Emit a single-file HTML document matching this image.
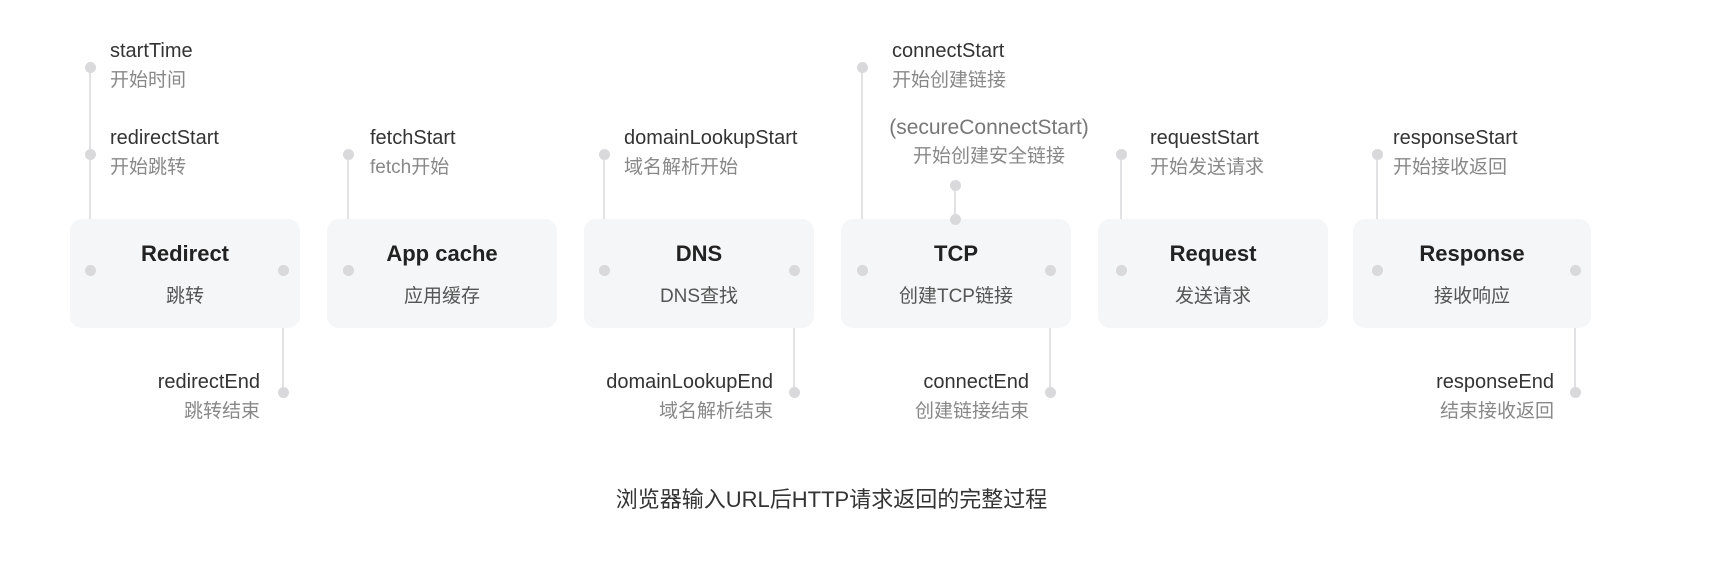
<!DOCTYPE html>
<html><head><meta charset="utf-8"><style>
body{margin:0;width:1709px;height:561px;background:#fff;position:relative;overflow:hidden;font-family:"Liberation Sans","Noto Sans CJK SC",sans-serif;}
.box{position:absolute;top:219px;width:230px;height:109px;background:#f5f6f7;border-radius:12px;text-align:center}
.box .t{position:absolute;left:0;right:0;top:22px;font-size:22px;font-weight:bold;color:#222}
.box .s{position:absolute;left:0;right:0;top:62px;font-size:19px;color:#555}
.d{position:absolute;width:11px;height:11px;border-radius:50%;background:#d9d9db;margin:-5px 0 0 -5px}
.l{position:absolute;width:2px;background:#e2e2e4;margin-left:-1px}
.lb{position:absolute;font-size:20px;line-height:29px;white-space:nowrap}
.lb b{font-weight:normal;color:#333;display:block}
.lb i{font-style:normal;color:#888;display:block;font-size:19px}
.r{text-align:right}
</style></head><body>
<div class="l" style="left:90px;top:67px;height:203px"></div>
<div class="l" style="left:348px;top:154px;height:116px"></div>
<div class="l" style="left:604px;top:154px;height:116px"></div>
<div class="l" style="left:862px;top:67px;height:203px"></div>
<div class="l" style="left:955px;top:185px;height:34px"></div>
<div class="l" style="left:1121px;top:154px;height:116px"></div>
<div class="l" style="left:1377px;top:154px;height:116px"></div>
<div class="l" style="left:283px;top:270px;height:122px"></div>
<div class="l" style="left:794px;top:270px;height:122px"></div>
<div class="l" style="left:1050px;top:270px;height:122px"></div>
<div class="l" style="left:1575px;top:270px;height:122px"></div>

<div class="box" style="left:70px"><div class="t">Redirect</div><div class="s">跳转</div></div>
<div class="box" style="left:327px"><div class="t">App cache</div><div class="s">应用缓存</div></div>
<div class="box" style="left:584px"><div class="t">DNS</div><div class="s">DNS查找</div></div>
<div class="box" style="left:841px"><div class="t">TCP</div><div class="s">创建TCP链接</div></div>
<div class="box" style="left:1098px"><div class="t">Request</div><div class="s">发送请求</div></div>
<div class="box" style="left:1353px;width:238px"><div class="t">Response</div><div class="s">接收响应</div></div>

<div class="d" style="left:90px;top:67px"></div>
<div class="d" style="left:90px;top:154px"></div>
<div class="d" style="left:90px;top:270px"></div>
<div class="d" style="left:283px;top:270px"></div>
<div class="d" style="left:283px;top:392px"></div>
<div class="d" style="left:348px;top:154px"></div>
<div class="d" style="left:348px;top:270px"></div>
<div class="d" style="left:604px;top:154px"></div>
<div class="d" style="left:604px;top:270px"></div>
<div class="d" style="left:794px;top:270px"></div>
<div class="d" style="left:794px;top:392px"></div>
<div class="d" style="left:862px;top:67px"></div>
<div class="d" style="left:862px;top:270px"></div>
<div class="d" style="left:955px;top:185px"></div>
<div class="d" style="left:955px;top:219px"></div>
<div class="d" style="left:1050px;top:270px"></div>
<div class="d" style="left:1050px;top:392px"></div>
<div class="d" style="left:1121px;top:154px"></div>
<div class="d" style="left:1121px;top:270px"></div>
<div class="d" style="left:1377px;top:154px"></div>
<div class="d" style="left:1377px;top:270px"></div>
<div class="d" style="left:1575px;top:270px"></div>
<div class="d" style="left:1575px;top:392px"></div>

<div class="lb" style="left:110px;top:37px"><b>startTime</b><i>开始时间</i></div>
<div class="lb" style="left:110px;top:124px"><b>redirectStart</b><i>开始跳转</i></div>
<div class="lb" style="left:370px;top:124px"><b>fetchStart</b><i>fetch开始</i></div>
<div class="lb" style="left:624px;top:124px"><b>domainLookupStart</b><i>域名解析开始</i></div>
<div class="lb" style="left:892px;top:37px"><b>connectStart</b><i>开始创建链接</i></div>
<div class="lb" style="left:871px;top:113px;text-align:center;width:236px"><b style="color:#777;font-size:21px">(secureConnectStart)</b><i>开始创建安全链接</i></div>
<div class="lb" style="left:1150px;top:124px"><b>requestStart</b><i>开始发送请求</i></div>
<div class="lb" style="left:1393px;top:124px"><b>responseStart</b><i>开始接收返回</i></div>

<div class="lb r" style="right:1449px;top:368px"><b>redirectEnd</b><i>跳转结束</i></div>
<div class="lb r" style="right:936px;top:368px"><b>domainLookupEnd</b><i>域名解析结束</i></div>
<div class="lb r" style="right:680px;top:368px"><b>connectEnd</b><i>创建链接结束</i></div>
<div class="lb r" style="right:155px;top:368px"><b>responseEnd</b><i>结束接收返回</i></div>

<div style="position:absolute;left:0;width:1663px;text-align:center;top:482px;font-size:22px;color:#333">浏览器输入URL后HTTP请求返回的完整过程</div>
</body></html>
